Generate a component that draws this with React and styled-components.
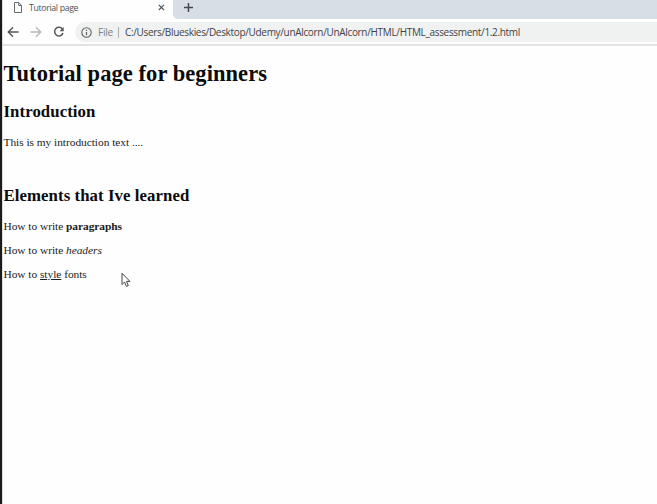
import React from "react";
import styled, { createGlobalStyle } from "styled-components";

const Global = createGlobalStyle`
  * { box-sizing: border-box; }
  body { margin: 0; background: #fff; overflow: hidden; }
  h1, h2, p { margin: 0; }
`;

const Window = styled.div`
  position: relative;
  width: 657px;
  height: 504px;
  overflow: hidden;
  display: flex;
  flex-direction: column;
  background: #fefefe;
  border-left: 2px solid #1b1a1c;
  box-shadow: inset 1px 0 0 #dcdcdc;
`;

const TabStrip = styled.div`
  display: flex;
  height: 19px;
  margin-left: 1px;
`;

const Tab = styled.div`
  display: flex;
  align-items: center;
  width: 170px;
  height: 19px;
  padding: 0 8px 4px 11px;
  background: #fefefe;
`;

const TabTitle = styled.span`
  flex: 1;
  margin-left: 7px;
  font: 8.8px/14px "Open Sans", sans-serif;
  letter-spacing: -0.36px;
  color: #505356;
  white-space: nowrap;
`;

const StripRest = styled.div`
  flex: 1;
  padding: 2px 0 0 10px;
  background: linear-gradient(#d9dfe5, #d7dee5 4px);
  border-bottom-left-radius: 5px;
`;

const Toolbar = styled.div`
  display: flex;
  align-items: center;
  height: 27px;
  margin-left: 1px;
  padding: 1px 0 0 4px;
  border-bottom: 2px solid #e1e2e2;
`;

const NavIcon = styled.svg`
  display: block;
  flex: none;
  margin-right: ${(p) => p.$gap || 0}px;
`;

const AddressBar = styled.div`
  display: flex;
  align-items: center;
  flex: 1;
  height: 20px;
  padding-left: 6px;
  background: #f0f2f1;
  border-radius: 10px 0 0 10px;
  font: 10px/20px "Open Sans", sans-serif;
  white-space: nowrap;
`;

const Scheme = styled.span`
  width: 15px;
  margin-left: 6px;
  letter-spacing: -0.2px;
  color: #7a7e81;
`;

const Divider = styled.span`
  width: 1px;
  height: 11px;
  margin: 0 6px 0 5px;
  background: #a9acae;
`;

const Url = styled.span`
  letter-spacing: -0.325px;
  color: #3f4245;
`;

const Page = styled.main`
  padding: 14px 0 0 1.5px;
  font-family: "Liberation Serif", serif;
  color: #0c0c0c;
  white-space: nowrap;
`;

const Title = styled.h1`
  font-size: 22.5px;
  line-height: 28px;
  letter-spacing: 0.06px;
`;

const Heading = styled.h2`
  margin-top: ${(p) => p.$top}px;
  font-size: 16.8px;
  line-height: 20px;
  letter-spacing: 0.07px;
`;

const Paragraph = styled.p`
  margin-top: ${(p) => p.$top}px;
  font-size: 11.4px;
  line-height: 14px;
  letter-spacing: -0.035px;
  color: #202020;
`;

const Pointer = styled.svg`
  position: absolute;
  left: 119px;
  top: 272px;
`;

export default function App() {
  return (
    <>
      <Global />
      <Window>
        <TabStrip>
          <Tab>
            <NavIcon width="8" height="11" viewBox="0 0 8 11" fill="none" stroke="#66696c">
              <path d="M.5.5h4.3l2.7 2.8v7.2h-7zM4.7.7v2.8h2.7" />
            </NavIcon>
            <TabTitle>Tutorial page</TabTitle>
            <NavIcon width="7" height="7" viewBox="0 0 7 7" stroke="#55585b" strokeWidth="1.2">
              <path d="M.8.8l5.2 5.2M6 .8L.8 6" />
            </NavIcon>
          </Tab>
          <StripRest>
            <NavIcon width="11" height="11" viewBox="0 0 11 11" stroke="#45494d" strokeWidth="1.5">
              <path d="M5.5 1v9M1 5.5h9" />
            </NavIcon>
          </StripRest>
        </TabStrip>
        <Toolbar>
          <NavIcon $gap="11" width="12" height="12" viewBox="0 0 12 12" fill="none" stroke="#505356" strokeWidth="1.4">
            <path d="M11.5 6H1.5M6 1.3L1.3 6 6 10.7" />
          </NavIcon>
          <NavIcon $gap="11" width="12" height="12" viewBox="0 0 12 12" fill="none" stroke="#b5b7b8" strokeWidth="1.3">
            <path d="M.5 6h10M6 1.3L10.7 6 6 10.7" />
          </NavIcon>
          <NavIcon $gap="10" width="12" height="12" viewBox="0 0 12 12" fill="none" stroke="#55585b" strokeWidth="1.5">
            <path d="M9.6 3.4A4.3 4.3 0 1 0 10 7" />
            <path d="M10.7 1v4.2H6.5z" fill="#55585b" stroke="none" />
          </NavIcon>
          <AddressBar>
            <NavIcon width="11" height="11" viewBox="0 0 11 11" fill="none" stroke="#5f6366" strokeWidth="1.1">
              <circle cx="5.5" cy="5.5" r="4.7" />
              <path d="M5.5 5v3.2M5.5 2.7v1.2" strokeWidth="1.2" />
            </NavIcon>
            <Scheme>File</Scheme>
            <Divider />
            <Url>
              C:/Users/Blueskies/Desktop/Udemy/unAlcorn/UnAlcorn/HTML/HTML_assessment/1.2.html
            </Url>
          </AddressBar>
        </Toolbar>
        <Page>
          <Title>Tutorial page for beginners</Title>
          <Heading $top={14}>Introduction</Heading>
          <Paragraph $top={13}>This is my introduction text ....</Paragraph>
          <Heading $top={37}>Elements that Ive learned</Heading>
          <Paragraph $top={13}>How to write <b>paragraphs</b></Paragraph>
          <Paragraph $top={10}>How to write <i>headers</i></Paragraph>
          <Paragraph $top={10}>How to <u>style</u> fonts</Paragraph>
        </Page>
        <Pointer width="10" height="16" viewBox="0 0 10 16" fill="#fff" stroke="#444" strokeWidth="1">
          <path d="M1 1.3v11.2l2.6-2.4 1.8 4.3 1.9-.8-1.8-4.2H9z" />
        </Pointer>
      </Window>
    </>
  );
}
